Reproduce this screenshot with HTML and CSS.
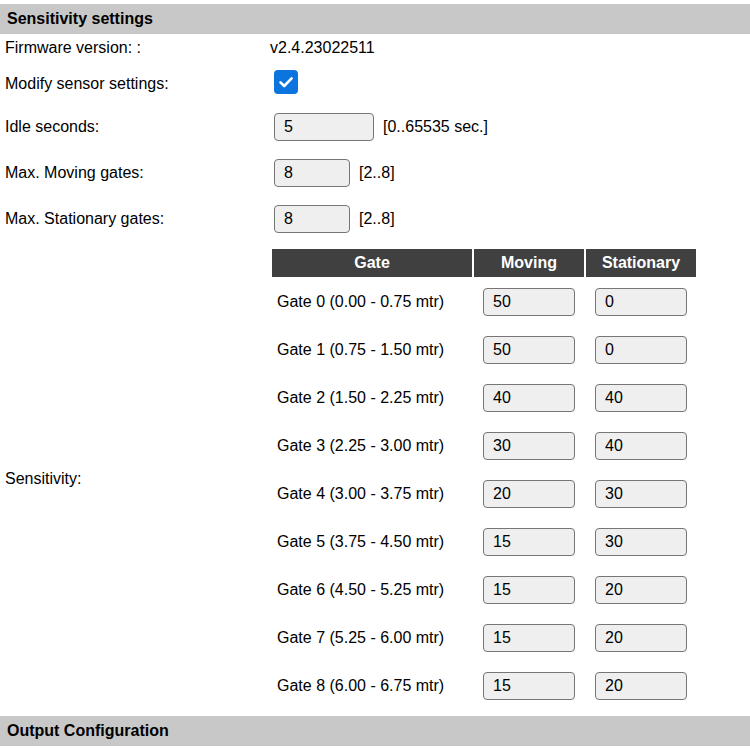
FILE: index.html
```html
<!DOCTYPE html>
<html>
<head>
<meta charset="utf-8">
<link rel="stylesheet" href="styles.css">
</head>
<body>
<div class="section-bar">Sensitivity settings</div>
<div class="form">
  <div class="label row-fw nudge">Firmware version: :</div>
  <div class="value row-fw nudge"><span class="fw">v2.4.23022511</span></div>

  <div class="label row-cb nudge2">Modify sensor settings:</div>
  <div class="value row-cb">
    <span class="checkbox"><svg width="24" height="24" viewBox="0 0 24 24"><path d="M6.5 12.3 L10.2 16 L17.6 8.4" fill="none" stroke="#fff" stroke-width="2.6" stroke-linecap="round" stroke-linejoin="round"/></svg></span>
  </div>

  <div class="label row-in">Idle seconds:</div>
  <div class="value row-in"><input class="inp w100" type="text" value="5"><span class="hint">[0..65535 sec.]</span></div>

  <div class="label row-in">Max. Moving gates:</div>
  <div class="value row-in"><input class="inp w76" type="text" value="8"><span class="hint">[2..8]</span></div>

  <div class="label row-in2">Max. Stationary gates:</div>
  <div class="value row-in2"><input class="inp w76" type="text" value="8"><span class="hint">[2..8]</span></div>

  <div class="label row-sens">Sensitivity:</div>
  <div class="value row-sens">
    <div class="gates">
      <div class="th">Gate</div><div class="th">Moving</div><div class="th">Stationary</div>
      <div class="gname">Gate 0 (0.00 - 0.75 mtr)</div><div class="gcell"><input class="inp w92" type="text" value="50"></div><div class="gcell"><input class="inp w92" type="text" value="0"></div>
      <div class="gname">Gate 1 (0.75 - 1.50 mtr)</div><div class="gcell"><input class="inp w92" type="text" value="50"></div><div class="gcell"><input class="inp w92" type="text" value="0"></div>
      <div class="gname">Gate 2 (1.50 - 2.25 mtr)</div><div class="gcell"><input class="inp w92" type="text" value="40"></div><div class="gcell"><input class="inp w92" type="text" value="40"></div>
      <div class="gname">Gate 3 (2.25 - 3.00 mtr)</div><div class="gcell"><input class="inp w92" type="text" value="30"></div><div class="gcell"><input class="inp w92" type="text" value="40"></div>
      <div class="gname">Gate 4 (3.00 - 3.75 mtr)</div><div class="gcell"><input class="inp w92" type="text" value="20"></div><div class="gcell"><input class="inp w92" type="text" value="30"></div>
      <div class="gname">Gate 5 (3.75 - 4.50 mtr)</div><div class="gcell"><input class="inp w92" type="text" value="15"></div><div class="gcell"><input class="inp w92" type="text" value="30"></div>
      <div class="gname">Gate 6 (4.50 - 5.25 mtr)</div><div class="gcell"><input class="inp w92" type="text" value="15"></div><div class="gcell"><input class="inp w92" type="text" value="20"></div>
      <div class="gname">Gate 7 (5.25 - 6.00 mtr)</div><div class="gcell"><input class="inp w92" type="text" value="15"></div><div class="gcell"><input class="inp w92" type="text" value="20"></div>
      <div class="gname">Gate 8 (6.00 - 6.75 mtr)</div><div class="gcell"><input class="inp w92" type="text" value="15"></div><div class="gcell"><input class="inp w92" type="text" value="20"></div>
    </div>
  </div>
</div>
<div class="section-bar">Output Configuration</div>
</body>
</html>
```
FILE: styles.css
```css
html, body {
  margin: 0;
  padding: 0;
  background: #fff;
}
body {
  font-family: "Liberation Sans", Arial, sans-serif;
  font-size: 16px;
  color: #000;
  padding-top: 4px;
}
.section-bar {
  height: 30px;
  background: #c8c8c8;
  font-weight: bold;
  padding-left: 7px;
  display: flex;
  align-items: center;
  box-sizing: border-box;
}
.form {
  display: grid;
  grid-template-columns: 265px 1fr;
  padding-left: 5px;
}
.label, .value {
  display: flex;
  align-items: center;
  box-sizing: border-box;
}
.nudge { padding-top: 2px; }
.nudge2 { padding-top: 4px; }
.row-fw { height: 26px; }
.row-cb { height: 44px; }
.row-in { height: 46px; }
.row-in2 { height: 45px; }
.row-sens { height: 475px; }
.checkbox {
  width: 24px;
  height: 24px;
  border-radius: 4px;
  background: #0b74de;
  margin-left: 4px;
  display: block;
}
.checkbox svg { display: block; }
.inp {
  box-sizing: border-box;
  height: 28px;
  border: 1px solid #767676;
  border-radius: 4px;
  background: #efefef;
  font-family: "Liberation Sans", Arial, sans-serif;
  font-size: 16px;
  color: #000;
  padding: 0 0 0 9px;
  margin: 0;
  outline: none;
}
.value .inp.w100, .value .inp.w76 { margin-left: 4px; }
.w100 { width: 100px; }
.w76 { width: 76px; }
.w92 { width: 92px; }
.hint { margin-left: 9px; }
.gates {
  display: grid;
  grid-template-columns: 200px 110px 110px;
  column-gap: 2px;
  grid-template-rows: 28px repeat(9, 48px);
  margin-left: 2px;
  margin-top: 0;
}
.th {
  background: #404040;
  color: #fff;
  font-weight: bold;
  display: flex;
  align-items: center;
  justify-content: center;
}
.gname {
  padding-left: 5px;
  padding-top: 2px;
  display: flex;
  align-items: center;
  box-sizing: border-box;
}
.gcell {
  display: flex;
  align-items: center;
  justify-content: center;
  padding-top: 2px;
  box-sizing: border-box;
}
```
